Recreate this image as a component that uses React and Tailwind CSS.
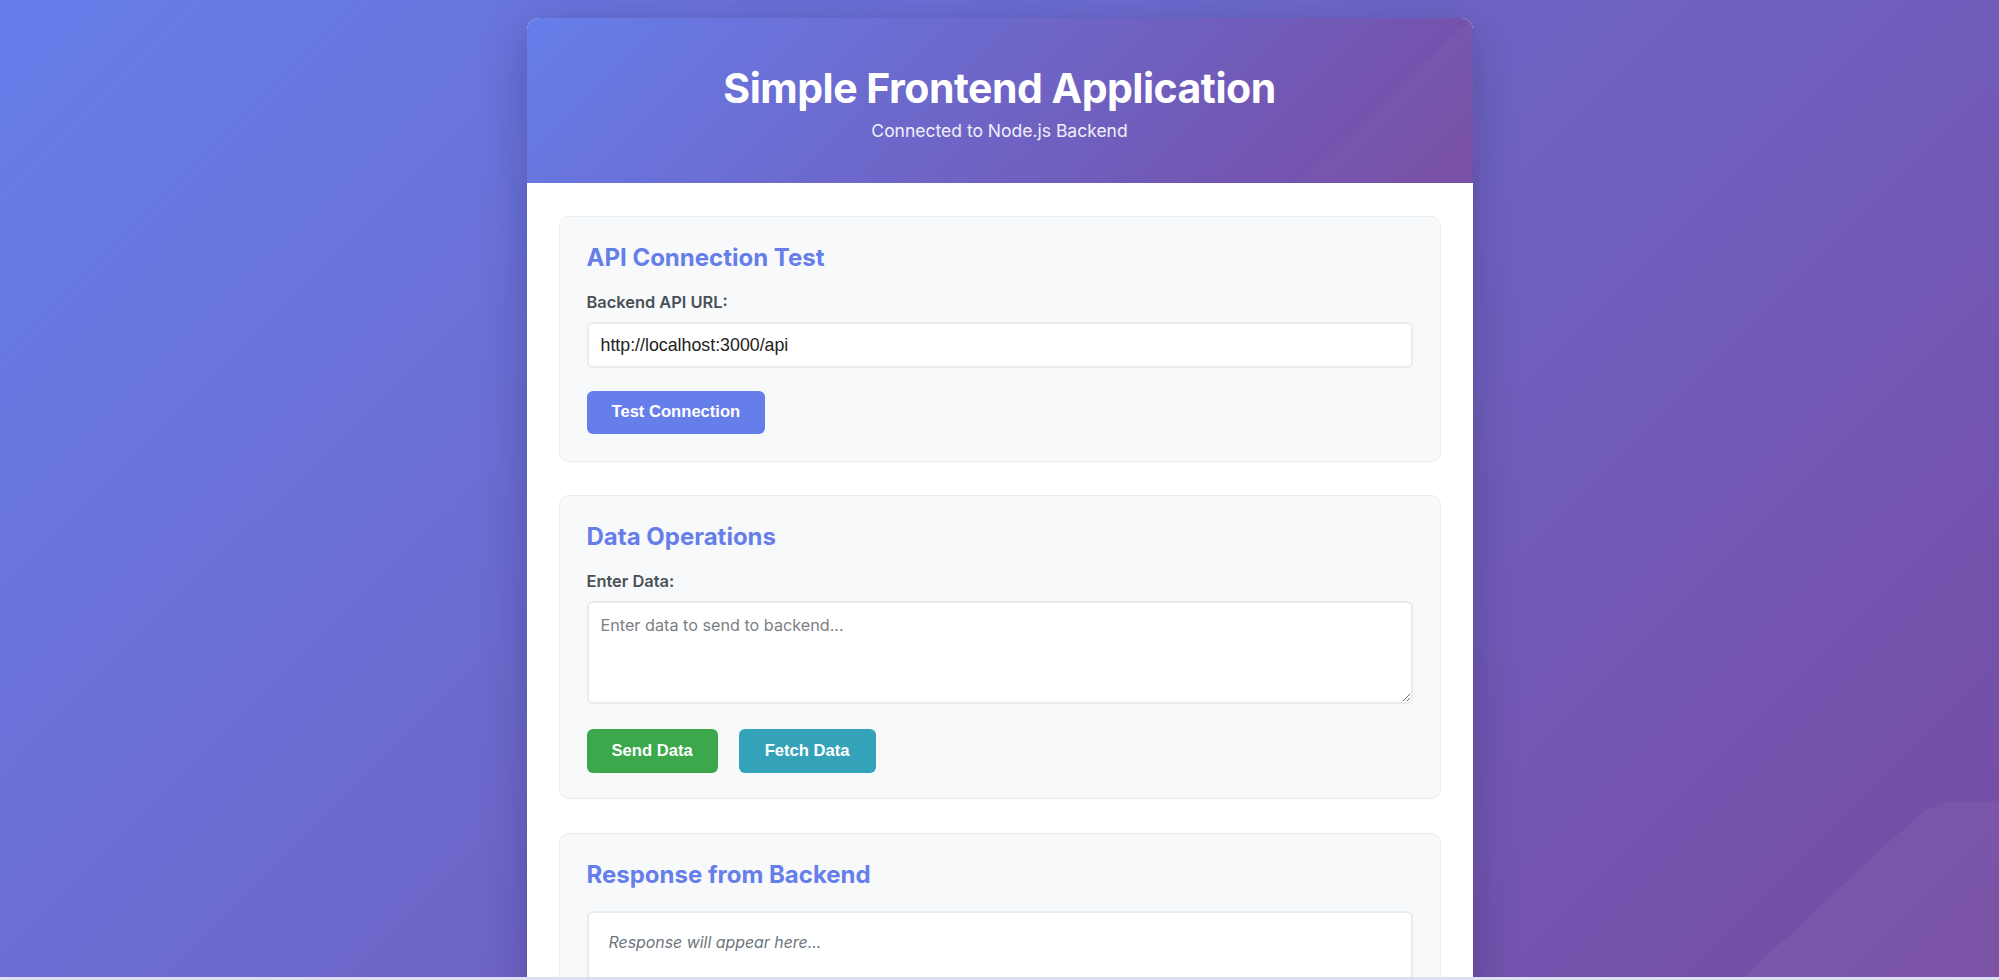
export default function App() {
  const inter = "font-['Inter','Noto_Sans',sans-serif]";
  const arial = "font-['Liberation_Sans','Arial',sans-serif]";
  return (
    <div className={`relative h-[980px] w-full overflow-hidden bg-[linear-gradient(135deg,#667eea_0%,#764ba2_100%)] ${inter}`}>
      <svg className="absolute bottom-0 right-0" width="270" height="185" viewBox="0 0 270 185" aria-hidden="true">
        <path d="M12 185 L185 24 Q205 6 232 6 L270 6 L270 185 Z" fill="rgba(255,255,255,0.045)" />
      </svg>

      <div className="relative mx-auto mt-[18px] w-[946px] overflow-hidden rounded-[12px] bg-white shadow-[0_12px_45px_rgba(20,20,60,0.28)]">
        <header className="relative h-[165px] overflow-hidden bg-[linear-gradient(135deg,#667eea_0%,#764ba2_100%)] text-center text-white">
          <svg className="absolute inset-0" width="946" height="165" viewBox="0 0 946 165" aria-hidden="true">
            <path d="M771 165 L944 0 L946 0 L946 165 Z" fill="rgba(255,255,255,0.025)" />
          </svg>
          <div className="relative flex flex-col items-center pt-[45px]">
            <h1 className="text-[41px] font-bold leading-[50px] tracking-[-0.5px]">Simple Frontend Application</h1>
            <p className="mt-[7px] text-[17.5px] leading-[22px] text-white/90">Connected to Node.js Backend</p>
          </div>
        </header>

        <main className="px-[32px] pt-[33px]">
          <section className="mb-[33px] rounded-[10px] border border-[#e9ecef] bg-[#f8f9fa] p-[27px]">
            <h2 className="mb-[20px] text-[24px] font-bold leading-[28px] text-[#667eea]">API Connection Test</h2>
            <label className="mb-[10px] block text-[16.4px] font-semibold leading-[20px] text-[#495057]">Backend API URL:</label>
            <input
              readOnly
              value="http://localhost:3000/api"
              className={`block h-[46px] w-full rounded-[6px] border-2 border-[#e9ecef] bg-white px-[12px] text-[17.8px] text-[#222] outline-none ${arial}`}
            />
            <button className={`mt-[23px] h-[43px] rounded-[6px] bg-[#667eea] px-[25px] text-[16.6px] font-bold text-white ${arial}`}>
              Test Connection
            </button>
          </section>

          <section className="mb-[34px] rounded-[10px] border border-[#e9ecef] bg-[#f8f9fa] p-[27px] pb-[25px]">
            <h2 className="mb-[20px] text-[24px] font-bold leading-[28px] text-[#667eea]">Data Operations</h2>
            <label className="mb-[10px] block text-[16.4px] font-semibold leading-[20px] text-[#495057]">Enter Data:</label>
            <textarea
              placeholder="Enter data to send to backend..."
              className="block h-[103px] w-full rounded-[6px] border-2 border-[#e9ecef] bg-white px-[12px] pb-[12px] pt-[11px] text-[16.2px] leading-[22px] text-[#222] outline-none placeholder:text-[#7b8086]"
            />
            <div className="mt-[25px] flex gap-[21px]">
              <button className={`h-[44px] rounded-[6px] bg-[#3aa84b] px-[25px] text-[16.6px] font-bold text-white ${arial}`}>Send Data</button>
              <button className={`h-[44px] rounded-[6px] bg-[#34a2b9] px-[26px] text-[16.6px] font-bold text-white ${arial}`}>Fetch Data</button>
            </div>
          </section>

          <section className="rounded-[10px] border border-[#e9ecef] bg-[#f8f9fa] p-[27px]">
            <h2 className="mb-[22px] text-[24px] font-bold leading-[28px] text-[#667eea]">Response from Backend</h2>
            <div className="min-h-[120px] rounded-[6px] border-2 border-[#e9ecef] bg-white px-[20px] pb-[20px] pt-[19px]">
              <p className="text-[15.9px] italic leading-[22px] text-[#6c757d]">Response will appear here...</p>
            </div>
          </section>
        </main>
      </div>

      <div className="absolute bottom-0 left-0 h-[3px] w-full bg-[#dde0f4]" />
    </div>
  );
}
